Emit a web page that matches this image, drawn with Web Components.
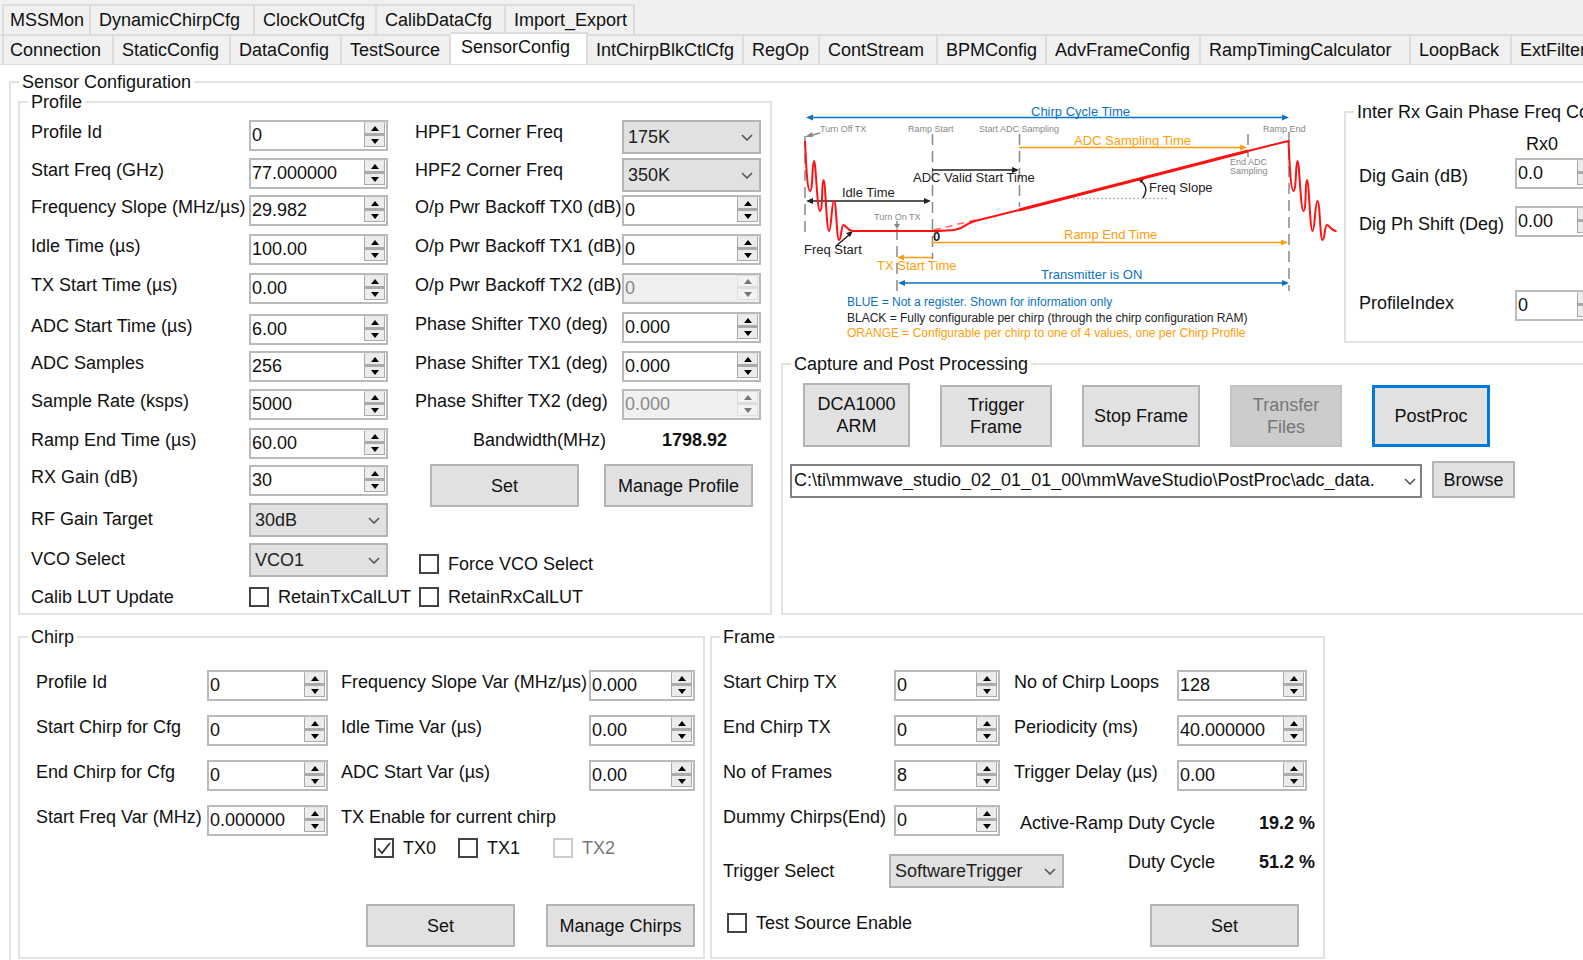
<!DOCTYPE html>
<html lang="en">
<head>
<meta charset="utf-8">
<title>mmWave Studio - SensorConfig</title>
<style>
  html, body { margin: 0; height: 100%; }
  body {
    overflow: hidden;
    background: #fff;
    color: #111;
    font: 18px/20px "Liberation Sans", Arial, sans-serif;
  }
</style>
</head>
<body>
<sensor-page></sensor-page>

<script>
const define = (name, css, html, setup) => {
  const template = document.createElement("template");
  template.innerHTML = `<style>
    *, *::before { box-sizing: border-box; }
    [hidden] { display: none; }
    button, input, select { font: inherit; color: inherit; margin: 0; border-radius: 0; }
    ${css}</style>${html}`;
  customElements.define(name, class extends HTMLElement {
    constructor() {
      super();
      this.attachShadow({ mode: "open" }).append(template.content.cloneNode(true));
    }
    connectedCallback() {
      if (setup && !this.ready) setup(this, this.shadowRoot);
      this.ready = true;
    }
  });
};

/* ---------- controls ---------- */

define("push-button", `
  :host { display: block; width: 149px; height: 43px; }
  button { width: 100%; height: 100%; padding: 0 4px; background: #e1e1e1; border: 2px solid #b4b4b4; line-height: 22px; }
  button:disabled { background: #ccc; border-color: #c2c2c2; color: #777; }
  :host([default]) button { border: 3px solid #0078d7; }
`, `<button type="button"><slot></slot></button>`, (host, root) => {
  root.querySelector("button").disabled = host.hasAttribute("disabled");
});

define("spin-field", `
  :host { display: grid; grid-template-columns: var(--label, 100px) var(--control, 106px); align-items: start; white-space: nowrap; }
  label { padding-top: var(--label-top, 2px); }
  .box { display: flex; height: 31px; border: 2px solid #b9b9c0; background: #fff; }
  input { flex: 1; min-width: 0; height: 26px; padding: 0 0 0 1px; border: 0; outline: 0; background: none; }
  .arrows { display: grid; grid-template-rows: 13px 12px; width: 21px; margin-right: 1px; }
  .arrows button { display: grid; place-items: center; padding: 0; border: 1px solid #aaa; background: #ececec; }
  .arrows button:first-child { border-top-color: #e4e4e4; border-bottom-width: 2px; }
  svg { display: block; width: 8px; height: 5px; fill: #000; }
  :host([disabled]) .box { background: #f0f0f0; }
  :host([disabled]) input { color: #888; }
  :host([disabled]) svg { fill: #777; }
  :host([disabled]) .arrows button { border-color: #ddd; background: #f2f2f2; }
`, `
  <label for="value"></label>
  <div class="box">
    <input id="value" type="text" inputmode="decimal">
    <div class="arrows">
      <button type="button" tabindex="-1" aria-label="Increase"><svg viewBox="0 0 8 5"><path d="M0 5 4 0l4 5z"/></svg></button>
      <button type="button" tabindex="-1" aria-label="Decrease"><svg viewBox="0 0 8 5"><path d="M0 0 4 5l4-5z"/></svg></button>
    </div>
  </div>`, (host, root) => {
  const input = root.querySelector("input");
  root.querySelector("label").textContent = host.getAttribute("label");
  input.value = host.getAttribute("value");
  root.querySelectorAll("input, button").forEach(e => e.disabled = host.hasAttribute("disabled"));
});

define("select-field", `
  :host { display: grid; grid-template-columns: var(--label, 100px) var(--control, 139px); align-items: start; white-space: nowrap; }
  label { padding-top: var(--label-top, 2px); }
  .box { display: grid; height: 34px; align-items: center; }
  select { grid-area: 1 / 1; width: 100%; height: 34px; padding: 0 30px 0 4px; appearance: none; background: #e1e1e1; border: 2px solid #b4b4b4; color: #222; }
  svg { grid-area: 1 / 1; justify-self: end; margin-right: 8px; width: 12px; height: 7px; fill: none; stroke: #555; stroke-width: 1.6; pointer-events: none; }
  :host([editable]) { grid-template-columns: minmax(0, 1fr); }
  :host([editable]) select { background: #fff; border-color: #7f7f7f; padding: 0 24px 2px 2px; color: #111; }
  :host([editable]) svg { margin-right: 6px; }
`, `
  <label for="choice"></label>
  <div class="box">
    <select id="choice"><option></option></select>
    <svg viewBox="0 0 12 7"><path d="M1 1l5 5 5-5"/></svg>
  </div>`, (host, root) => {
  const label = root.querySelector("label");
  if (host.hasAttribute("editable")) {
    root.querySelector("select").setAttribute("aria-label", host.getAttribute("label"));
    label.remove();
  } else {
    label.textContent = host.getAttribute("label");
  }
  root.querySelector("option").textContent = host.getAttribute("value");
});

define("check-field", `
  :host { display: block; white-space: nowrap; }
  label { display: flex; gap: 9px; height: 20px; }
  .mark { display: grid; width: 20px; height: 20px; }
  input { grid-area: 1 / 1; appearance: none; width: 20px; height: 20px; border: 2px solid #444; background: #fff; }
  svg { grid-area: 1 / 1; width: 20px; height: 20px; fill: none; stroke: #333; stroke-width: 1.8; visibility: hidden; pointer-events: none; }
  input:checked + svg { visibility: visible; }
  :host([disabled]) { color: #777; }
  :host([disabled]) input { border-color: #ccc; }
`, `<label><span class="mark"><input type="checkbox"><svg viewBox="0 0 20 20"><path d="M4 10.5l4 4.5 8-10"/></svg></span><slot></slot></label>`,
(host, root) => {
  const input = root.querySelector("input");
  input.checked = host.hasAttribute("checked");
  input.disabled = host.hasAttribute("disabled");
});

define("group-box", `
  :host { display: grid; min-width: 0; }
  fieldset { min-width: 0; margin: 0; padding: 0; border: 2px solid #e2e2e2; }
  legend { margin-left: 8px; padding: 0 3px; white-space: nowrap; }
`, `<fieldset><legend></legend><slot></slot></fieldset>`, (host, root) => {
  root.querySelector("legend").textContent = host.getAttribute("label");
});

/* ---------- tab strip ---------- */

define("tab-strip", `
  :host { display: block; padding-top: 4px; background: #f0f0f0; overflow: hidden; border-bottom: 1px solid #dcdcdc; }
  .row { display: grid; grid-auto-flow: column; justify-content: start; height: 30px; padding-left: 2px; }
  .upper { grid-template-columns: 89px 164px 122px 129px 129px; }
  .lower { grid-template-columns: 112px 117px 111px 109px 137px 156px 76px 118px 109px 154px 210px 101px 150px; box-shadow: inset 0 2px #dedede; }
  button { padding: 0 0 0 8px; border: 0 solid #dcdcdc; border-width: 2px 2px 0 0; background: #f0f0f0; text-align: left; white-space: nowrap; }
  button:first-child { border-left-width: 2px; padding-left: 6px; }
  [aria-selected="true"] { position: relative; margin: -2px 0 -1px; background: #fff; padding: 0 0 5px 10px; }
`, `
  <div class="row upper" role="tablist">
    <button role="tab">MSSMon</button><button role="tab">DynamicChirpCfg</button><button role="tab">ClockOutCfg</button><button role="tab">CalibDataCfg</button><button role="tab">Import_Export</button>
  </div>
  <div class="row lower" role="tablist">
    <button role="tab">Connection</button><button role="tab">StaticConfig</button><button role="tab">DataConfig</button><button role="tab">TestSource</button><button role="tab" aria-selected="true">SensorConfig</button><button role="tab">IntChirpBlkCtlCfg</button><button role="tab">RegOp</button><button role="tab">ContStream</button><button role="tab">BPMConfig</button><button role="tab">AdvFrameConfig</button><button role="tab">RampTimingCalculator</button><button role="tab">LoopBack</button><button role="tab">ExtFilter</button>
  </div>`);

/* ---------- chirp timing diagram ---------- */

const ringing = "c1 20 2 50 5 50s2-30 4-30 3 50 6 50 1.500-31 3.500-31 3 51 5.500 51 2.500-30 5-30 2.500 39 5 39 2-15 4.500-15 4 6 9.500 6";
define("chirp-diagram", `
  :host { display: block; width: 560px; }
  svg { display: block; width: 100%; height: auto; font-family: "Liberation Sans", Arial, sans-serif; }
  text { font-size: 13px; }
  .small { font-size: 9px; fill: #888; }
  .note { font-size: 12px; }
  .blue { fill: #0a72c4; } .orange { fill: #ff9d0a; } .black { fill: #222; }
  .line { fill: none; stroke-width: 1.5; }
  .dash { stroke: #888; stroke-dasharray: 11 6; }
`, `
  <svg viewBox="1 3 560 250" role="img" aria-label="Chirp timing diagram">
    <path class="line dash" d="M25 47V146M152.500 45V170M239.500 45V118M117 140V202M468 45V68M509 43V202"/>
    <path class="line" stroke="#888" d="M40 44 29 47M117 132v4"/>
    <path fill="#888" d="M25 48l7-5 1 5zM114 135h6l-3 5z"/>
    <g class="line" stroke="#0a72c4"><path d="M30 28.500H505M121 194H505"/></g>
    <path class="blue" d="M26 28.500l7-3v6zM509 28.500l-7-3v6zM118 194l7-3v6zM509 194l-7-3v6z"/>
    <g class="line" stroke="#ff9d0a"><path d="M239 58.500H462M152 153.500H503M152 168.500H123"/></g>
    <path class="orange" d="M467 58.500l-7-3v6zM508 153.500l-7-3v6zM117 168.500l7-3v6z"/>
    <g class="line" stroke="#222"><path d="M152 81H233M30 112H147M56 157 69 146M361 92c6 5 6 11 2 17"/></g>
    <path class="black" d="M239 81l-7-3v6zM26 112l7-3v6zM151 112l-7-3v6zM73 142l-3 6-4-4zM358 90l6 0-3 4z"/>
    <path class="line" stroke="#bbb" stroke-dasharray="2 2" stroke-width="1" d="M293 109.500H388"/>
    <path class="line" stroke="#f66" stroke-dasharray="7 5" stroke-width="1" d="M154 141 195 131"/>
    <g fill="none" stroke="#f11" stroke-width="2" stroke-linejoin="round">
      <path d="M25 52${ringing}H152C190 142 178 137 195 132L239 121M468 62L508.500 52${ringing}"/>
      <path stroke-width="3" d="M239 121 468 62"/>
    </g>
    <text class="blue" x="251" y="27">Chirp Cycle Time</text>
    <text class="small" x="40" y="43">Turn Off TX</text>
    <text class="small" x="128" y="43">Ramp Start</text>
    <text class="small" x="199" y="43">Start ADC Sampling</text>
    <text class="small" x="483" y="43">Ramp End</text>
    <text class="orange" x="294" y="56">ADC Sampling Time</text>
    <text class="small" x="450" y="76">End ADC</text>
    <text class="small" x="450" y="85">Sampling</text>
    <text class="black" x="133" y="93">ADC Valid Start Time</text>
    <text class="black" x="62" y="108">Idle Time</text>
    <text class="black" x="369" y="103">Freq Slope</text>
    <text class="small" x="94" y="131">Turn On TX</text>
    <text class="black" x="153" y="152" font-weight="bold">0</text>
    <text class="orange" x="284" y="150">Ramp End Time</text>
    <text class="black" x="24" y="165">Freq Start</text>
    <text class="orange" x="97" y="181">TX Start Time</text>
    <text class="blue" x="261" y="190">Transmitter is ON</text>
    <text class="note blue" x="67" y="217">BLUE = Not a register. Shown for information only</text>
    <text class="note black" x="67" y="233">BLACK = Fully configurable per chirp (through the chirp configuration RAM)</text>
    <text class="note orange" x="67" y="248">ORANGE = Configurable per chirp to one of 4 values, one per Chirp Profile</text>
  </svg>`);

/* ---------- panels ---------- */

define("profile-panel", `
  :host { display: grid; }
  .body { display: grid; grid-template-columns: 357px 1fr; column-gap: 27px; padding: 8px 8px 6px 11px; --control: 139px; }
  .left { display: grid; grid-template-rows: 38px 37px 39px 39px 41px 37px 38px 39px 37px 38px 40px 44px 20px; --label: 218px; }
  .left select-field { --label-top: 6px; }
  .right { display: grid; grid-template-rows: 38px 37px 39px 39px 39px 39px 38px 41px 34px 90px 33px 20px; --label: 207px; }
  .calib { display: grid; grid-template-columns: 218px 1fr; }
  .bandwidth { display: grid; grid-template-columns: 189px 1fr; padding-left: 58px; align-items: start; }
  .actions { display: flex; gap: 25px; padding-left: 15px; }
  .right check-field { padding-left: 4px; }
`, `
  <group-box label="Profile"><div class="body">
    <div class="left">
      <spin-field label="Profile Id" value="0"></spin-field>
      <spin-field label="Start Freq (GHz)" value="77.000000"></spin-field>
      <spin-field label="Frequency Slope (MHz/µs)" value="29.982"></spin-field>
      <spin-field label="Idle Time (µs)" value="100.00"></spin-field>
      <spin-field label="TX Start Time (µs)" value="0.00"></spin-field>
      <spin-field label="ADC Start Time (µs)" value="6.00"></spin-field>
      <spin-field label="ADC Samples" value="256"></spin-field>
      <spin-field label="Sample Rate (ksps)" value="5000"></spin-field>
      <spin-field label="Ramp End Time (µs)" value="60.00"></spin-field>
      <spin-field label="RX Gain (dB)" value="30"></spin-field>
      <select-field label="RF Gain Target" value="30dB"></select-field>
      <select-field label="VCO Select" value="VCO1"></select-field>
      <div class="calib"><span>Calib LUT Update</span><check-field>RetainTxCalLUT</check-field></div>
    </div>
    <div class="right">
      <select-field label="HPF1 Corner Freq" value="175K"></select-field>
      <select-field label="HPF2 Corner Freq" value="350K"></select-field>
      <spin-field label="O/p Pwr Backoff TX0 (dB)" value="0"></spin-field>
      <spin-field label="O/p Pwr Backoff TX1 (dB)" value="0"></spin-field>
      <spin-field label="O/p Pwr Backoff TX2 (dB)" value="0" disabled></spin-field>
      <spin-field label="Phase Shifter TX0 (deg)" value="0.000"></spin-field>
      <spin-field label="Phase Shifter TX1 (deg)" value="0.000"></spin-field>
      <spin-field label="Phase Shifter TX2 (deg)" value="0.000" disabled></spin-field>
      <div class="bandwidth"><span>Bandwidth(MHz)</span><b>1798.92</b></div>
      <div class="actions"><push-button>Set</push-button><push-button>Manage Profile</push-button></div>
      <check-field>Force VCO Select</check-field>
      <check-field>RetainRxCalLUT</check-field>
    </div>
  </div></group-box>`);

define("gain-panel", `
  :host { display: grid; min-width: 280px; }
  .body { display: grid; grid-template-rows: 24px 48px 84px 51px; padding: 12px 0 0 13px; --label: 156px; --control: 86px; --label-top: 8px; }
  .head { padding-left: 167px; }
  .last { --label-top: 3px; }
`, `
  <group-box label="Inter Rx Gain Phase Freq Config"><div class="body">
    <span class="head">Rx0</span>
    <spin-field label="Dig Gain (dB)" value="0.0"></spin-field>
    <spin-field label="Dig Ph Shift (Deg)" value="0.00"></spin-field>
    <spin-field class="last" label="ProfileIndex" value="0"></spin-field>
  </div></group-box>`);

define("capture-panel", `
  :host { display: grid; }
  .steps { display: flex; align-items: flex-end; gap: 30px; padding: 9px 0 0 20px; }
  .steps push-button { width: 118px; height: 62px; }
  .steps .arm { width: 107px; height: 64px; }
  .steps .narrow { width: 112px; }
  .file { display: flex; align-items: flex-end; gap: 10px; padding: 14px 0 0 7px; }
  .file select-field { width: 632px; }
  .file push-button { width: 83px; height: 37px; }
`, `
  <group-box label="Capture and Post Processing">
    <div class="steps">
      <push-button class="arm">DCA1000<br>ARM</push-button>
      <push-button class="narrow">Trigger<br>Frame</push-button>
      <push-button>Stop Frame</push-button>
      <push-button class="narrow" disabled>Transfer<br>Files</push-button>
      <push-button default>PostProc</push-button>
    </div>
    <div class="file">
      <select-field editable label="Capture file" value="C:\\ti\\mmwave_studio_02_01_01_00\\mmWaveStudio\\PostProc\\adc_data."></select-field>
      <push-button>Browse</push-button>
    </div>
  </group-box>`);

define("chirp-panel", `
  :host { display: grid; }
  .body { display: grid; grid-template-columns: 292px 1fr; column-gap: 13px; padding: 23px 8px 10px 16px; }
  .left, .right { display: grid; align-content: start; grid-auto-rows: 45px; }
  .left { --label: 171px; --control: 121px; }
  .right { --label: 248px; --control: 106px; grid-template-rows: 45px 45px 45px 33px 66px 43px; }
  .head { padding-top: 2px; }
  .tx { display: grid; grid-template-columns: 84px 95px 1fr; padding-left: 33px; }
  .actions { display: flex; gap: 31px; padding-left: 25px; }
`, `
  <group-box label="Chirp"><div class="body">
    <div class="left">
      <spin-field label="Profile Id" value="0"></spin-field>
      <spin-field label="Start Chirp for Cfg" value="0"></spin-field>
      <spin-field label="End Chirp for Cfg" value="0"></spin-field>
      <spin-field label="Start Freq Var (MHz)" value="0.000000"></spin-field>
    </div>
    <div class="right">
      <spin-field label="Frequency Slope Var (MHz/µs)" value="0.000"></spin-field>
      <spin-field label="Idle Time Var (µs)" value="0.00"></spin-field>
      <spin-field label="ADC Start Var (µs)" value="0.00"></spin-field>
      <span class="head">TX Enable for current chirp</span>
      <div class="tx"><check-field checked>TX0</check-field><check-field>TX1</check-field><check-field disabled>TX2</check-field></div>
      <div class="actions"><push-button>Set</push-button><push-button>Manage Chirps</push-button></div>
    </div>
  </div></group-box>`);

define("frame-panel", `
  :host { display: grid; }
  .body { display: grid; grid-template-columns: 278px 1fr; column-gap: 13px; padding: 23px 8px 10px 11px; }
  .left { display: grid; grid-template-rows: 45px 45px 45px 49px 59px 20px; --label: 171px; --control: 106px; align-content: start; }
  .left select-field { --label: 166px; --control: 175px; --label-top: 7px; }
  .left check-field { padding-left: 4px; }
  .right { display: grid; grid-template-rows: 45px 45px 48px 39px 57px 43px; --label: 163px; --control: 130px; align-content: start; }
  .duty { display: grid; grid-template-columns: 1fr 100px; padding: 5px 0 0; text-align: right; white-space: nowrap; }
  .right push-button { margin-left: 136px; }
`, `
  <group-box label="Frame"><div class="body">
    <div class="left">
      <spin-field label="Start Chirp TX" value="0"></spin-field>
      <spin-field label="End Chirp TX" value="0"></spin-field>
      <spin-field label="No of Frames" value="8"></spin-field>
      <spin-field label="Dummy Chirps(End)" value="0"></spin-field>
      <select-field label="Trigger Select" value="SoftwareTrigger"></select-field>
      <check-field>Test Source Enable</check-field>
    </div>
    <div class="right">
      <spin-field label="No of Chirp Loops" value="128"></spin-field>
      <spin-field label="Periodicity (ms)" value="40.000000"></spin-field>
      <spin-field label="Trigger Delay (µs)" value="0.00"></spin-field>
      <div class="duty"><span>Active-Ramp Duty Cycle</span><b>19.2 %</b></div>
      <div class="duty"><span>Duty Cycle</span><b>51.2 %</b></div>
      <push-button>Set</push-button>
    </div>
  </div></group-box>`);

define("sensor-page", `
  :host { display: block; height: 100%; overflow: hidden; }
  .sensor { margin: 7px -20px 0 9px; }
  .upper { display: grid; grid-template-columns: 754px minmax(0, 1fr); column-gap: 9px; padding: 0 0 12px 7px; }
  .side { display: grid; grid-template-rows: auto 1fr; row-gap: 11px; min-width: 0; }
  .plot { display: flex; gap: 3px; }
  chirp-diagram { flex: none; }
  gain-panel { flex: 1; margin-top: 10px; }
  .lower { display: grid; grid-template-columns: 687px 615px; column-gap: 5px; padding: 0 0 20px 7px; }
`, `
  <tab-strip></tab-strip>
  <group-box class="sensor" label="Sensor Configuration">
    <div class="upper">
      <profile-panel></profile-panel>
      <div class="side">
        <div class="plot"><chirp-diagram></chirp-diagram><gain-panel></gain-panel></div>
        <capture-panel></capture-panel>
      </div>
    </div>
    <div class="lower"><chirp-panel></chirp-panel><frame-panel></frame-panel></div>
  </group-box>`);
</script>
</body>
</html>
